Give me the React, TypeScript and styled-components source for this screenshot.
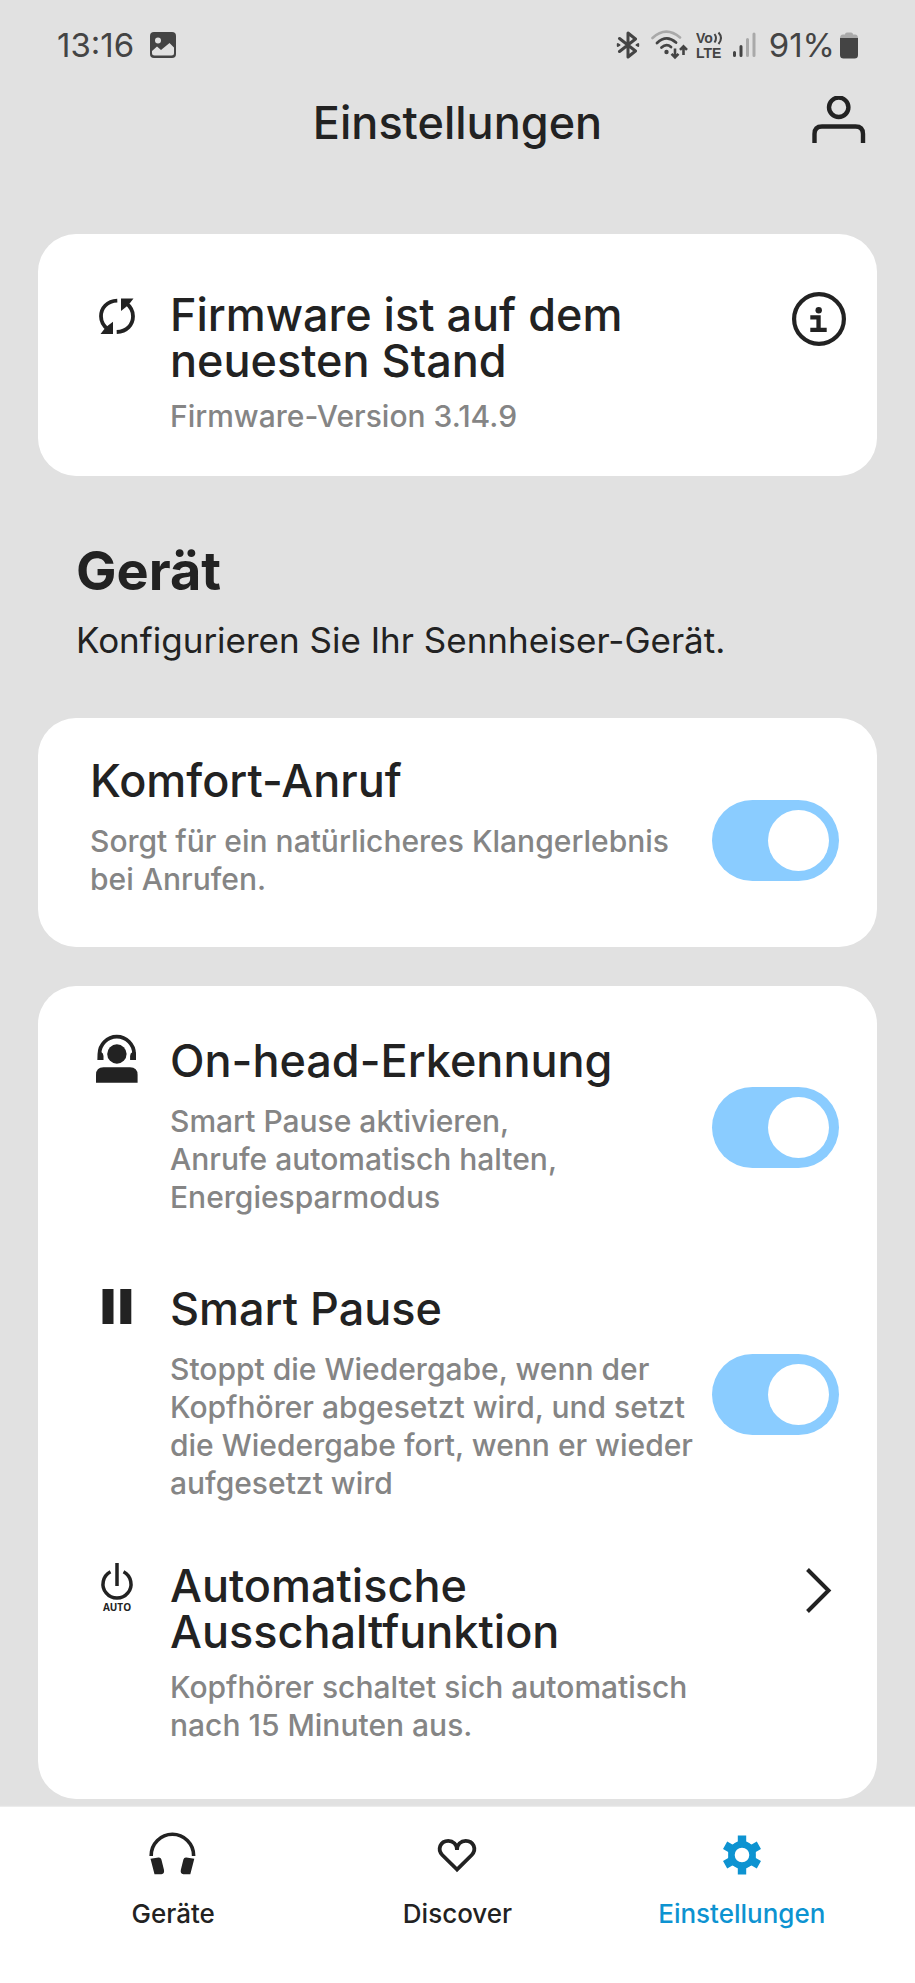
import React, { useState } from "react";
import styled, { createGlobalStyle } from "styled-components";

const ink = "#222222";
const muted = "#858585";
const status = "#444444";
const accent = "#0d93d1";

const GlobalStyle = createGlobalStyle`
  *, *::before, *::after { box-sizing: border-box; }
  body {
    margin: 0;
    background: #e1e1e1;
    color: ${ink};
    font-family: Inter, "Liberation Sans", sans-serif;
  }
`;

const Page = styled.div`
  display: flex;
  flex-direction: column;
  min-height: 100vh;
`;

const StatusBar = styled.div`
  display: flex;
  align-items: center;
  justify-content: space-between;
  height: 90px;
  padding: 0 57px;
  color: ${status};
  font-size: 33px;
  font-weight: 400;
`;

const StatusGroup = styled.div<{ $gap: number }>`
  display: flex;
  align-items: center;
  gap: ${(p) => p.$gap}px;
`;

const Header = styled.header`
  display: grid;
  grid-template-columns: 1fr auto 1fr;
  align-items: center;
  height: 66px;
  padding: 0 49px;
`;

const PageTitle = styled.h1`
  grid-column: 2;
  margin: 0;
  font-size: 45px;
  line-height: 46px;
  font-weight: 500;
`;

const IconButton = styled.button`
  display: block;
  width: 54px;
  height: 54px;
  margin-left: auto;
  padding: 0;
  border: 0;
  background: none;
  color: ${ink};
  cursor: pointer;
`;

const Main = styled.main`
  flex: 1;
  padding: 78px 38px 8px;
`;

const Card = styled.section<{ $bottom: number }>`
  padding: 0 31px ${(p) => p.$bottom}px 52px;
  border-radius: 38px;
  background: #ffffff;

  & + & {
    margin-top: 39px;
  }
`;

const SectionHead = styled.div`
  padding: 65px 38px 57px;
`;

const SectionTitle = styled.h2`
  margin: 0 0 18px;
  font-size: 54px;
  line-height: 60px;
  font-weight: 700;
`;

const SectionText = styled.p`
  margin: 0;
  font-size: 35px;
  line-height: 42px;
`;

const Row = styled.div<{ $top: number; $center?: boolean }>`
  display: flex;
  align-items: ${(p) => (p.$center ? "center" : "flex-start")};
  padding-top: ${(p) => p.$top}px;
`;

const RowIcon = styled.svg`
  flex: none;
  align-self: flex-start;
  width: 54px;
  height: 54px;
  margin-right: 26px;
  overflow: visible;
`;

const RowText = styled.div<{ $bottom?: number }>`
  flex: 1;
  min-width: 0;
  padding-bottom: ${(p) => p.$bottom ?? 0}px;
`;

const RowTitle = styled.h3`
  min-height: 51px;
  margin: 0 0 13px;
  font-size: 45px;
  line-height: 46px;
  font-weight: 500;
  white-space: pre-line;
`;

const RowNote = styled.p`
  margin: 0;
  color: ${muted};
  font-size: 30px;
  line-height: 38px;
  font-weight: 500;
  white-space: pre-line;
`;

const RowAction = styled.div`
  flex: none;
  width: 134px;
`;

const Switch = styled.input`
  appearance: none;
  display: block;
  width: 127px;
  height: 81px;
  margin: 0;
  padding: 10px;
  border-radius: 41px;
  background: #c4c4c4;
  cursor: pointer;

  &::before {
    content: "";
    display: block;
    width: 61px;
    height: 61px;
    border-radius: 50%;
    background: #ffffff;
  }

  &:checked {
    background: #8accff;
  }

  &:checked::before {
    margin-left: auto;
  }
`;

const NavBar = styled.nav`
  display: flex;
  padding: 21px 31px 53px;
  background: #ffffff;
  box-shadow: 0 -1px 1px #ececec;
`;

const NavLink = styled.a<{ $active?: boolean }>`
  display: flex;
  flex: 1;
  flex-direction: column;
  align-items: center;
  gap: 16px;
  color: ${(p) => (p.$active ? accent : ink)};
  font-size: 26px;
  line-height: 32px;
  font-weight: 500;
  text-decoration: none;
`;

const PictureIcon = () => (
  <svg width="26" height="26" viewBox="0 0 26 26" aria-hidden="true">
    <rect width="26" height="26" rx="4" fill={status} />
    <circle cx="8" cy="8.5" r="3" fill="#e1e1e1" />
    <path d="M2 21V19L7 14.5L11 18L19.500 11L24 15.500V21Q24 23.500 21.500 23.500H4.500Q2 23.500 2 21Z" fill="#e1e1e1" />
  </svg>
);

const BluetoothIcon = () => (
  <svg width="30" height="28" viewBox="0 0 30 28" fill="none" stroke={status} strokeWidth="3" strokeLinejoin="round" strokeLinecap="round" aria-hidden="true">
    <path d="M3.500 7.500L19.500 20L12 26V2L19.500 8L3.500 20.500" />
    <path d="M1.800 13V15L3.500 14ZM22.200 13V15L20.500 14Z" strokeWidth="2" />
  </svg>
);

const WifiIcon = () => (
  <svg width="40" height="30" viewBox="0 0 40 30" fill="none" strokeLinecap="round" aria-hidden="true">
    <path d="M1.500 8Q15 -4.500 29 7.500" stroke="#a9a9a9" strokeWidth="2.600" />
    <path d="M6 13Q15.500 4 25 12.500" stroke={status} strokeWidth="2.800" />
    <path d="M10.500 17.500Q15.500 13 20 17" stroke={status} strokeWidth="2.800" />
    <circle cx="15.500" cy="22" r="2.200" fill={status} />
    <path d="M24 18.500V27M20.500 23.800L24 27.300L27.500 23.800M32.500 25V16.500M29 19.800L32.500 16.300L36 19.800" stroke={status} strokeWidth="2.600" strokeLinecap="butt" />
  </svg>
);

const VolteIcon = () => (
  <svg width="32" height="30" viewBox="0 0 32 30" aria-hidden="true">
    <g fill={status} fontFamily="Liberation Sans, sans-serif" fontWeight="700" fontSize="14">
      <text x="0" y="13">Vo</text>
      <text x="0" y="28">LTE</text>
    </g>
    <path d="M18.500 4Q21.500 8 18.500 12.500M22.500 2.500Q27.500 8 22.500 14" fill="none" stroke={status} strokeWidth="2" />
  </svg>
);

const SignalIcon = () => (
  <svg width="31" height="26" viewBox="0 0 31 26" strokeWidth="3" strokeLinecap="round" aria-hidden="true">
    <path d="M1.500 20.500V23.500M8 14.500V23.500" stroke={status} />
    <path d="M14.500 7.500V23.500M21 2V23.500" stroke="#a9a9a9" />
  </svg>
);

const BatteryIcon = () => (
  <svg width="18" height="27" viewBox="0 0 18 27" aria-hidden="true">
    <path d="M5 2.500Q5 0.500 7 0.500H11Q13 0.500 13 2.500H15Q18 2.500 18 6.500H0Q0 2.500 3 2.500Z" fill="#a9a9a9" />
    <path d="M0 6H18V23Q18 26.500 14.500 26.500H3.500Q0 26.500 0 23Z" fill={status} />
  </svg>
);

const PersonIcon = () => (
  <svg width="54" height="54" viewBox="0 0 54 54" fill="none" stroke="currentColor" strokeWidth="4.400" aria-hidden="true">
    <circle cx="26.700" cy="11.300" r="9.700" />
    <path d="M2.500 47V38Q2.500 30.500 10 30.500H43.500Q51 30.500 51 38V47" />
  </svg>
);

const InfoIcon = () => (
  <svg width="54" height="54" viewBox="0 0 54 54" aria-hidden="true">
    <circle cx="27" cy="27" r="24.900" fill="none" stroke="currentColor" strokeWidth="4.200" />
    <circle cx="26.700" cy="18.300" r="3.200" fill="currentColor" />
    <path d="M18.300 23.300H28.700V35.800H34.700V40H18.300V35.800H24.400V27.400H18.300Z" fill="currentColor" />
  </svg>
);

const ChevronIcon = () => (
  <svg width="54" height="54" viewBox="0 0 54 54" fill="none" stroke="currentColor" strokeWidth="4" aria-hidden="true">
    <path d="M15.500 6.500L36.500 27.500L15.500 48.500" />
  </svg>
);

const SyncIcon = () => (
  <RowIcon viewBox="0 0 54 54" aria-hidden="true">
    <path d="M27.300 8.600C17 9 11 16 11 24.300C11 30 13.500 34 18 37.500M26.700 40C37 39.600 43 32.600 43 24.300C43 18.600 40.500 14.600 36 11.100" fill="none" stroke={ink} strokeWidth="3.800" />
    <path d="M10.500 42L14 37.500L18 33.500L23 29.700V42ZM43.500 6.600L40 11.100L36 15.100L31 18.900V6.600Z" fill={ink} />
  </RowIcon>
);

const WearerIcon = () => (
  <RowIcon viewBox="0 0 54 54" aria-hidden="true">
    <path d="M9.500 22V16A17.300 17.300 0 0 1 44.100 16V22" fill="none" stroke={ink} strokeWidth="3.800" />
    <path d="M8 14H11Q13.500 15 13.500 18V22H7.600ZM45.600 14H42.600Q40.100 15 40.100 18V22H46Z" fill={ink} />
    <circle cx="26.900" cy="16" r="9.700" fill={ink} />
    <path d="M6 44.700V37Q6 29.300 13.500 29.300H40Q47.600 29.300 47.600 37V44.700Z" fill={ink} />
  </RowIcon>
);

const PauseIcon = () => (
  <RowIcon viewBox="0 0 54 54" aria-hidden="true">
    <path d="M12.500 3H23.500V38H12.500ZM30.300 3H41.300V38H30.300Z" fill={ink} />
  </RowIcon>
);

const AutoOffIcon = () => (
  <RowIcon viewBox="0 0 54 54" aria-hidden="true">
    <path d="M27 0V23M20.500 8.700A14 14 0 1 0 33.500 8.700" fill="none" stroke={ink} strokeWidth="3.500" />
    <text x="27" y="47.500" textAnchor="middle" fill={ink} fontFamily="Open Sans, sans-serif" fontWeight="700" fontSize="10">AUTO</text>
  </RowIcon>
);

const HeadphonesIcon = () => (
  <svg width="54" height="54" viewBox="0 0 54 54" aria-hidden="true">
    <path d="M5.200 28V27.500A21.200 21.200 0 0 1 47.600 27.500V28" fill="none" stroke="currentColor" strokeWidth="3.600" />
    <path d="M4.500 30.800L12.500 29.600Q14.800 29.400 15.400 31.600L18 42Q18.600 45.800 15.500 46.200H8.500ZM48.300 30.800L40.300 29.600Q38 29.400 37.400 31.600L34.800 42Q34.200 45.800 37.300 46.200H44.300Z" fill="currentColor" />
  </svg>
);

const HeartIcon = () => (
  <svg width="54" height="54" viewBox="0 0 54 54" fill="none" stroke="currentColor" strokeWidth="3.800" aria-hidden="true">
    <path d="M27 41.500L12.300 27C7 21.500 10.300 12.800 18.300 12.800C23 12.800 27 16.300 27 22C27 16.300 31 12.800 35.700 12.800C43.700 12.800 47 21.500 41.700 27Z" />
  </svg>
);

const GearIcon = () => (
  <svg width="54" height="54" viewBox="-27 -27 54 54" fill="currentColor" aria-hidden="true">
    <circle r="10.600" fill="none" stroke="currentColor" strokeWidth="6.600" />
    {[0, 60, 120, 180, 240, 300].map((angle) => (
      <path key={angle} d="M-4.200 -19.500H4.200V-13.500L6.500 -11H-6.500L-4.200 -13.500Z" transform={`rotate(${angle})`} />
    ))}
  </svg>
);

type ToggleRowProps = {
  id: string;
  title: string;
  note: string;
  top: number;
  bottom?: number;
  icon?: React.ReactNode;
};

function ToggleRow({ id, title, note, top, bottom, icon }: ToggleRowProps) {
  const [on, setOn] = useState(true);
  return (
    <Row $top={top} $center>
      {icon}
      <RowText $bottom={bottom}>
        <RowTitle>
          <label htmlFor={id}>{title}</label>
        </RowTitle>
        <RowNote id={`${id}-note`}>{note}</RowNote>
      </RowText>
      <RowAction>
        <Switch
          id={id}
          type="checkbox"
          role="switch"
          aria-describedby={`${id}-note`}
          checked={on}
          onChange={(e) => setOn(e.target.checked)}
        />
      </RowAction>
    </Row>
  );
}

export default function App() {
  return (
    <Page>
      <GlobalStyle />
      <StatusBar>
        <StatusGroup $gap={16}>
          <span>13:16</span>
          <PictureIcon />
        </StatusGroup>
        <StatusGroup $gap={5}>
          <BluetoothIcon />
          <WifiIcon />
          <VolteIcon />
          <SignalIcon />
          <span>91%</span>
          <BatteryIcon />
        </StatusGroup>
      </StatusBar>

      <Header>
        <PageTitle>Einstellungen</PageTitle>
        <IconButton type="button" aria-label="Konto">
          <PersonIcon />
        </IconButton>
      </Header>

      <Main>
        <Card $bottom={41}>
          <Row $top={58}>
            <SyncIcon />
            <RowText>
              <RowTitle>{"Firmware ist auf dem\nneuesten Stand"}</RowTitle>
              <RowNote>Firmware-Version 3.14.9</RowNote>
            </RowText>
            <RowAction>
              <IconButton type="button" aria-label="Informationen zur Firmware">
                <InfoIcon />
              </IconButton>
            </RowAction>
          </Row>
        </Card>

        <SectionHead>
          <SectionTitle>Gerät</SectionTitle>
          <SectionText>Konfigurieren Sie Ihr Sennheiser-Gerät.</SectionText>
        </SectionHead>

        <Card $bottom={24}>
          <ToggleRow
            id="comfort-call"
            title="Komfort-Anruf"
            note={"Sorgt für ein natürlicheres Klangerlebnis\nbei Anrufen."}
            top={40}
            bottom={25}
          />
        </Card>

        <Card $bottom={55}>
          <ToggleRow
            id="on-head"
            title="On-head-Erkennung"
            note={"Smart Pause aktivieren,\nAnrufe automatisch halten,\nEnergiesparmodus"}
            top={52}
            icon={<WearerIcon />}
          />
          <ToggleRow
            id="smart-pause"
            title="Smart Pause"
            note={"Stoppt die Wiedergabe, wenn der\nKopfhörer abgesetzt wird, und setzt\ndie Wiedergabe fort, wenn er wieder\naufgesetzt wird"}
            top={70}
            icon={<PauseIcon />}
          />
          <Row $top={61}>
            <AutoOffIcon />
            <RowText>
              <RowTitle>{"Automatische\nAusschaltfunktion"}</RowTitle>
              <RowNote>{"Kopfhörer schaltet sich automatisch\nnach 15 Minuten aus."}</RowNote>
            </RowText>
            <RowAction>
              <IconButton type="button" aria-label="Automatische Ausschaltfunktion öffnen">
                <ChevronIcon />
              </IconButton>
            </RowAction>
          </Row>
        </Card>
      </Main>

      <NavBar>
        <NavLink href="#geraete">
          <HeadphonesIcon />
          Geräte
        </NavLink>
        <NavLink href="#discover">
          <HeartIcon />
          Discover
        </NavLink>
        <NavLink href="#einstellungen" $active aria-current="page">
          <GearIcon />
          Einstellungen
        </NavLink>
      </NavBar>
    </Page>
  );
}
